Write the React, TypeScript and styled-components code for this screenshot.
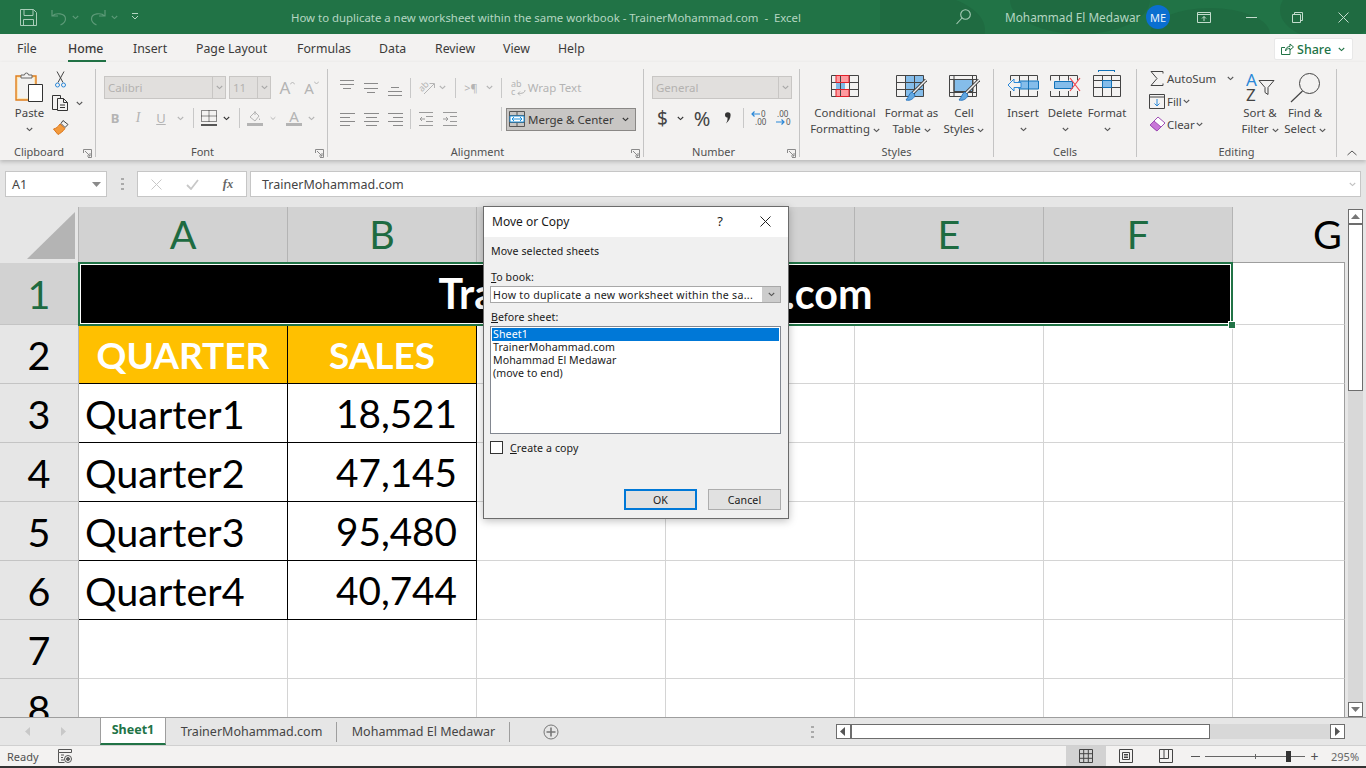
import React from 'react'
import styled, { createGlobalStyle } from 'styled-components'

const UI = '"Noto Sans", "Open Sans", "Liberation Sans", sans-serif'
const SHEET = 'Lato, "Liberation Sans", sans-serif'
const GREEN = '#217346'
const DIM = '#b4b4b4'
const INK = '#444444'

const Global = createGlobalStyle`
  html, body { margin: 0; padding: 0; overflow: hidden; }
  body { font-family: ${UI}; background: #e6e6e6; }
  * { box-sizing: border-box; }
`

const Page = styled.div`
  width: 1366px;
  height: 768px;
  display: flex;
  flex-direction: column;
  position: relative;
  overflow: hidden;
`

/* ---------- title bar ---------- */
const TitleBar = styled.header`
  height: 34px;
  flex: none;
  background: ${GREEN};
  display: flex;
  align-items: center;
  position: relative;
  overflow: hidden;
  color: #b5d6c2;
  font-size: 11.4px;
`
const Blobs = styled.svg`
  position: absolute;
  left: 880px;
  top: 0;
`
const Quick = styled.div`
  width: 291px;
  display: flex;
  align-items: center;
  padding-left: 20px;
  gap: 5px;
  flex: none;
  z-index: 1;
`
const TitleText = styled.div`
  width: 665px;
  flex: none;
  white-space: pre;
  z-index: 1;
`
const WindowTools = styled.div`
  flex: 1;
  display: flex;
  align-items: center;
  z-index: 1;
`
const Account = styled.span`
  width: 141px;
  margin-left: 34px;
  flex: none;
  white-space: nowrap;
  font-size: 11.8px;
`
const Avatar = styled.span`
  width: 24px;
  height: 24px;
  flex: none;
  border-radius: 50%;
  background: #0a6fd0;
  color: #e8f2fb;
  font-size: 11px;
  display: flex;
  align-items: center;
  justify-content: center;
`
const Slot = styled.span<{ $w: number }>`
  width: ${p => p.$w}px;
  flex: none;
  display: inline-flex;
  align-items: center;
  justify-content: center;
`

/* ---------- tab strip ---------- */
const TabStrip = styled.nav`
  height: 28px;
  flex: none;
  background: #f3f2f1;
  display: flex;
  align-items: flex-start;
  padding-left: 17px;
  font-size: 12.3px;
  color: #3b3a39;
  position: relative;
`
const RibbonTab = styled.span<{ $w: number; $on?: boolean }>`
  width: ${p => p.$w}px;
  flex: none;
  height: 28px;
  line-height: 29px;
  white-space: nowrap;
  position: relative;
  font-weight: ${p => (p.$on ? 500 : 400)};
  ${p =>
    p.$on &&
    `&::after { content: ''; position: absolute; left: 0; bottom: 0; width: 38px; height: 2px; background: ${GREEN}; }`}
`
const ShareButton = styled.div`
  position: absolute;
  left: 1274px;
  top: 4px;
  width: 79px;
  height: 22px;
  background: #fff;
  border: 1px solid #e8e8e8;
  border-radius: 2px;
  color: ${GREEN};
  font-size: 12.5px;
  font-weight: 500;
  display: flex;
  align-items: center;
  padding-left: 6px;
  gap: 3px;
`

/* ---------- ribbon ---------- */
const Ribbon = styled.section`
  height: 98px;
  flex: none;
  background: #f3f2f1;
  display: flex;
  box-shadow: 0 2px 4px rgba(0, 0, 0, 0.2);
  position: relative;
  z-index: 2;
  font-size: 11.4px;
  color: #444;
`
const Group = styled.div<{ $w: number }>`
  width: ${p => p.$w}px;
  flex: none;
  height: 88px;
  margin-top: 7px;
  border-right: 1px solid #c4c4c4;
  display: flex;
  flex-direction: column;
  position: relative;
`
const GroupBody = styled.div<{ $left?: number }>`
  flex: 1;
  display: flex;
  padding-left: ${p => p.$left ?? 0}px;
`
const GroupLabel = styled.div<{ $shift?: number }>`
  height: 16px;
  line-height: 16px;
  margin-bottom: -3px;
  text-align: center;
  font-size: 11px;
  color: #505050;
  padding-right: ${p => p.$shift ?? 0}px;
`
const Launcher = styled.span`
  position: absolute;
  right: 3px;
  bottom: -1px;
  line-height: 0;
`
const Stack = styled.div`
  display: flex;
  flex-direction: column;
`
const SmallStack = styled(Stack)`
  width: 90px;
  flex: none;
`
const ToolRow = styled.div<{ $h: number; $top?: number }>`
  height: ${p => p.$h}px;
  margin-top: ${p => p.$top ?? 0}px;
  display: flex;
  align-items: center;
`
const Tool = styled.span<{ $w: number; $off?: boolean; $size?: number }>`
  width: ${p => p.$w}px;
  flex: none;
  display: inline-flex;
  align-items: center;
  justify-content: center;
  color: ${p => (p.$off ? DIM : INK)};
  font-size: ${p => (p.$size ? `${p.$size}px` : 'inherit')};
  white-space: nowrap;
`
const BoldLetter = styled(Tool)`
  font-weight: 700;
`
const ItalicLetter = styled(Tool)`
  font-family: 'Liberation Serif', serif;
  font-style: italic;
`
const UnderLetter = styled(Tool)`
  text-decoration: underline;
`
const ToolSep = styled.span<{ $h?: number }>`
  width: 1px;
  height: ${p => p.$h ?? 20}px;
  flex: none;
  background: #c8c8c8;
`
const BigButton = styled.div<{ $w: number }>`
  width: ${p => p.$w}px;
  flex: none;
  display: flex;
  flex-direction: column;
  align-items: center;
  line-height: 16px;
  text-align: center;
  white-space: nowrap;
`
const BigIcon = styled.div<{ $pad: number }>`
  height: 36px;
  padding-top: ${p => p.$pad}px;
  display: flex;
  align-items: flex-start;
  justify-content: center;
  line-height: 0;
`
const DownChev = styled.div`
  height: 16px;
  display: flex;
  align-items: center;
`
const Combo = styled.div<{ $w: number; $ml?: number }>`
  width: ${p => p.$w}px;
  margin-left: ${p => p.$ml ?? 0}px;
  height: 23px;
  flex: none;
  display: flex;
  background: #e1dfdd;
  border: 1px solid #c8c6c4;
  color: #b4b2b0;
  font-size: 11.5px;
`
const ComboText = styled.span`
  flex: 1;
  line-height: 21px;
  padding-left: 3px;
  white-space: nowrap;
`
const ComboArrow = styled.span`
  width: 13px;
  border-left: 1px solid #c8c6c4;
  display: flex;
  align-items: center;
  justify-content: center;
`
const MergeButton = styled.div`
  width: 130px;
  height: 23px;
  flex: none;
  margin-left: 4px;
  background: #c8c6c4;
  border: 1px solid #8a8886;
  display: flex;
  align-items: center;
  padding-left: 2px;
  gap: 3px;
  color: #3b3a39;
  font-size: 11.5px;
  white-space: nowrap;
  svg {
    flex: none;
  }
`
const SmallCmd = styled.div<{ $h: number }>`
  height: ${p => p.$h}px;
  display: flex;
  align-items: center;
  white-space: nowrap;
`
const CmdIcon = styled.span`
  width: 18px;
  margin-right: 1px;
  flex: none;
  display: inline-flex;
  justify-content: center;
`
const Collapse = styled.span`
  position: absolute;
  right: 9px;
  bottom: 4px;
  line-height: 0;
`

/* ---------- formula bar ---------- */
const FormulaBar = styled.div`
  height: 47px;
  flex: none;
  background: #e6e6e6;
  padding: 11px 5px 10px;
  display: flex;
  font-size: 12.5px;
  color: #444;
`
const Field = styled.div<{ $w?: number }>`
  width: ${p => (p.$w ? `${p.$w}px` : 'auto')};
  flex: ${p => (p.$w ? 'none' : 1)};
  height: 26px;
  background: #fff;
  border: 1px solid #c6c6c6;
  display: flex;
  align-items: center;
`
const FieldText = styled.span<{ $left: number }>`
  padding-left: ${p => p.$left}px;
  white-space: nowrap;
  flex: 1;
`
const Grip = styled.span`
  width: 30px;
  flex: none;
  display: flex;
  align-items: center;
  justify-content: center;
`
const FxTool = styled.span`
  flex: 1;
  display: flex;
  align-items: center;
  justify-content: center;
`
const FxLabel = styled(FxTool)`
  font-family: 'Liberation Serif', serif;
  font-style: italic;
  font-weight: 700;
  color: #666;
`

/* ---------- sheet ---------- */
const SheetArea = styled.div`
  flex: 1;
  min-height: 0;
  display: flex;
  background: #e6e6e6;
`
const Grid = styled.div`
  width: 1345px;
  flex: none;
  display: grid;
  grid-template-columns: 79px 209px repeat(5, 189px) 112px;
  grid-template-rows: 56px 62px 59px 59px 59px 59px 59px 59px 59px;
  overflow: hidden;
  font-family: ${SHEET};
  font-size: 39.5px;
  color: #000;
`
const Corner = styled.div`
  background: #e6e6e6;
  border-right: 1px solid #b4b4b4;
  line-height: 0;
  padding: 5px 0 0 27px;
`
const ColHead = styled.div`
  background: #d2d2d2;
  color: #1e6b41;
  border-right: 1px solid #b4b4b4;
  padding-bottom: 3px;
  display: flex;
  align-items: center;
  justify-content: center;
`
const OffHead = styled.div`
  background: #e6e6e6;
  border-bottom: 1px solid #9e9e9e;
  display: flex;
  align-items: center;
  padding: 0 0 3px 80px;
`
const RowHead = styled.div<{ $on?: boolean }>`
  background: ${p => (p.$on ? '#d2d2d2' : '#e6e6e6')};
  color: ${p => (p.$on ? '#1e6b41' : '#000')};
  border-right: 1px solid #b4b4b4;
  border-bottom: 1px solid #c4c4c4;
  display: flex;
  align-items: center;
  justify-content: center;
`
const Cell = styled.div<{ $last?: boolean }>`
  background: #fff;
  border-right: 1px solid ${p => (p.$last ? '#9e9e9e' : '#d4d4d4')};
  border-bottom: 1px solid #d4d4d4;
`
const MergedTitle = styled.div`
  grid-column: 2 / 8;
  margin: -1px 0 -1px -1px;
  background: #000;
  color: #fff;
  border: 2px solid ${GREEN};
  box-shadow: inset 0 0 0 1px #fff;
  font-size: 41.2px;
  font-weight: 700;
  padding-bottom: 2px;
  display: flex;
  align-items: center;
  justify-content: center;
  position: relative;
  z-index: 1;
`
const FillHandle = styled.span`
  position: absolute;
  right: -4px;
  bottom: -4px;
  width: 6px;
  height: 6px;
  background: ${GREEN};
  outline: 1px solid #fff;
`
const HeadCell = styled.div`
  background: #ffc000;
  color: #fff;
  font-size: 37px;
  font-weight: 700;
  border-right: 1px solid #000;
  border-bottom: 1px solid #000;
  display: flex;
  align-items: center;
  justify-content: center;
`
const DataCell = styled.div<{ $num?: boolean }>`
  background: #fff;
  border-right: 1px solid #000;
  border-bottom: 1px solid #000;
  display: flex;
  align-items: center;
  font-size: ${p => (p.$num ? 38.7 : 39.5)}px;
  justify-content: ${p => (p.$num ? 'flex-end' : 'flex-start')};
  padding: ${p => (p.$num ? '0 19px 0 0' : '0 0 0 6px')};
`

/* ---------- scrollbars ---------- */
const VScroll = styled.div`
  width: 21px;
  flex: none;
  padding: 2px 3px 0 3px;
  display: flex;
  flex-direction: column;
`
const ScrollBtn = styled.div`
  width: 15px;
  height: 15px;
  flex: none;
  background: #fff;
  border: 1px solid #6d6d6d;
  display: flex;
  align-items: center;
  justify-content: center;
`
const VThumb = styled.div`
  height: 167px;
  flex: none;
  background: #fff;
  border: 1px solid #6d6d6d;
`
const VTrack = styled.div`
  flex: 1;
  background: #d8d8d8;
`
const TabBar = styled.div`
  height: 28px;
  flex: none;
  background: #e6e6e6;
  border-top: 1px solid #9e9e9e;
  display: flex;
  font-size: 12.5px;
  color: #444;
  position: relative;
  z-index: 1;
`
const TabNav = styled.div`
  width: 100px;
  flex: none;
  display: flex;
  align-items: center;
  padding-left: 24px;
  gap: 26px;
`
const ActiveTab = styled.div`
  width: 66px;
  flex: none;
  height: 28px;
  margin-top: -1px;
  padding-bottom: 2px;
  background: #fff;
  border: 1px solid #9e9e9e;
  border-bottom: 2px solid ${GREEN};
  color: ${GREEN};
  font-weight: 700;
  display: flex;
  align-items: center;
  justify-content: center;
`
const SheetTab = styled.div<{ $w: number }>`
  width: ${p => p.$w}px;
  flex: none;
  display: flex;
  align-items: center;
  justify-content: center;
  white-space: nowrap;
  position: relative;
  height: 26px;
  &::after {
    content: '';
    position: absolute;
    right: 0;
    top: 4px;
    height: 20px;
    width: 1px;
    background: #9e9e9e;
  }
`
const AddSheet = styled.div`
  width: 311px;
  flex: none;
  padding-left: 33px;
  display: flex;
  align-items: center;
`
const HScroll = styled.div`
  width: 509px;
  margin-top: 6px;
  height: 15px;
  flex: none;
  display: flex;
`
const HThumb = styled.div`
  width: 359px;
  flex: none;
  background: #fff;
  border: 1px solid #6d6d6d;
`
const HTrack = styled.div`
  flex: 1;
  background: #d8d8d8;
`
const StatusBar = styled.footer`
  height: 21px;
  flex: none;
  background: #f3f2f1;
  display: flex;
  align-items: center;
  font-size: 11px;
  color: #505050;
  padding-left: 7px;
  border-top: 1px solid #d0d0d0;
`
const StatusReady = styled.span`
  width: 51px;
  flex: none;
`
const StatusView = styled.span<{ $w: number; $on?: boolean }>`
  width: ${p => p.$w}px;
  height: 20px;
  flex: none;
  display: flex;
  align-items: center;
  justify-content: center;
  background: ${p => (p.$on ? '#d2d2d2' : 'transparent')};
`
const ZoomSlider = styled.div`
  width: 100px;
  height: 1px;
  flex: none;
  background: #666;
  position: relative;
`
const ZoomTick = styled.span`
  position: absolute;
  left: 50px;
  top: -2px;
  width: 1px;
  height: 5px;
  background: #666;
`
const ZoomThumb = styled.span`
  position: absolute;
  left: 81px;
  top: -5px;
  width: 5px;
  height: 11px;
  background: #333;
`
const PlusSign = styled(Slot)`
  font-size: 14px;
`
const ZoomValue = styled.span`
  margin-left: 7px;
  color: #666;
`
const BottomEdge = styled.div`
  height: 2px;
  flex: none;
  background: #333;
`

/* ---------- dialog ---------- */
const Dialog = styled.div`
  position: absolute;
  left: 483px;
  top: 206px;
  width: 306px;
  height: 313px;
  background: #f0f0f0;
  border: 1px solid #6b6b6b;
  box-shadow: 0 2px 8px rgba(0, 0, 0, 0.25);
  z-index: 5;
  font-size: 10.6px;
  color: #1a1a1a;
  display: flex;
  flex-direction: column;
  letter-spacing: 0.1px;
`
const DialogHead = styled.div`
  height: 30px;
  flex: none;
  background: #fff;
  display: flex;
  align-items: center;
  padding: 0 0 2px 8px;
  font-size: 12px;
  letter-spacing: 0;
`
const DialogTitle = styled.span`
  flex: 1;
`
const HeadBtn = styled.span<{ $w: number }>`
  width: ${p => p.$w}px;
  flex: none;
  display: inline-flex;
  justify-content: center;
  font-size: 13px;
`
const DialogBody = styled.div`
  flex: 1;
  padding: 6px 7px 8px 6px;
  display: flex;
  flex-direction: column;
`
const DlgLine = styled.div<{ $top?: number }>`
  height: 14px;
  line-height: 14px;
  margin-top: ${p => p.$top ?? 0}px;
  margin-left: 1px;
  white-space: nowrap;
`
const DlgCombo = styled.div`
  height: 17px;
  margin-top: 2px;
  background: #fff;
  border: 1px solid #a8a8a8;
  display: flex;
  align-items: center;
  padding-left: 2px;
  white-space: nowrap;
  overflow: hidden;
`
const DlgComboText = styled.span`
  flex: 1;
  letter-spacing: 0.29px;
`
const DlgComboBtn = styled.span`
  width: 18px;
  height: 15px;
  flex: none;
  background: #cccccc;
  display: flex;
  align-items: center;
  justify-content: center;
`
const ListBox = styled.div`
  height: 108px;
  margin-top: 2px;
  background: #fff;
  border: 1px solid #828790;
  padding: 1px 1px 0 1px;
  line-height: 13px;
`
const ListItem = styled.div<{ $on?: boolean }>`
  height: 13px;
  padding-left: 1px;
  background: ${p => (p.$on ? '#0078d7' : 'transparent')};
  color: ${p => (p.$on ? '#fff' : '#1a1a1a')};
`
const CheckRow = styled.div`
  margin-top: 7px;
  display: flex;
  align-items: center;
  height: 13px;
`
const CheckBox = styled.span`
  width: 13px;
  height: 13px;
  flex: none;
  background: #fff;
  border: 1px solid #333;
  margin-right: 7px;
`
const DlgActions = styled.div`
  margin-top: auto;
  display: flex;
  justify-content: flex-end;
  gap: 11px;
`
const DlgButton = styled.div<{ $def?: boolean }>`
  width: 73px;
  height: 21px;
  background: #e1e1e1;
  border: ${p => (p.$def ? '2px solid #0078d7' : '1px solid #adadad')};
  display: flex;
  align-items: center;
  justify-content: center;
`
const U = styled.span`
  text-decoration: underline;
`
const Raised = styled.svg`
  margin-bottom: 9px;
`

/* ---------- icons ---------- */
const Chev = ({ c = '#555', w = 7 }: { c?: string; w?: number }) => (
  <svg width={w} height="5" viewBox="0 0 7 5">
    <path d="M.8 1l2.700 2.600L6.200 1" fill="none" stroke={c} strokeWidth="1.100" />
  </svg>
)
const Launch = () => (
  <svg width="9" height="9" viewBox="0 0 9 9" fill="none" stroke="#8a8a8a">
    <path d="M.5 4V.5h8v8H5M2 2l5 5M7 4v3H4" />
  </svg>
)
const SaveIcon = () => (
  <svg width="17" height="17" viewBox="0 0 17 17" fill="none" stroke="#a9cdb8">
    <path d="M.5.500h13l3 3v13H.5zM4 .5v6h9v-6M3.500 16.500v-6h10v6" />
  </svg>
)
const Undo = ({ flip }: { flip?: boolean }) => (
  <svg width="16" height="17" viewBox="0 0 16 17" fill="none" stroke="#5d9a78" strokeWidth="1.200">
    <path transform={flip ? 'matrix(-1 0 0 1 16 0)' : undefined} d="M1 1v6h6M1.500 7c3-3.500 13-3 13 3 0 3-3 5-5 6" />
  </svg>
)
const Customize = () => (
  <svg width="8" height="8" viewBox="0 0 8 8" fill="none" stroke="#b5d6c2">
    <path d="M1 .5h6M1 3l3 3 3-3" />
  </svg>
)
const SearchIcon = () => (
  <svg width="15" height="16" viewBox="0 0 15 16" fill="none" stroke="#a9cdb8" strokeWidth="1.100">
    <circle cx="9.500" cy="5.500" r="4.800" />
    <path d="M6 9l-5.500 6" />
  </svg>
)
const DisplayIcon = () => (
  <svg width="14" height="11" viewBox="0 0 14 11" fill="none" stroke="#c3dccd">
    <path d="M.5.500h13v10H.5zM.5 2.500h13M7 9V4.500M5 6.500l2-2 2 2" />
  </svg>
)
const MinIcon = ({ c = '#c3dccd', w = 11 }: { c?: string; w?: number }) => (
  <svg width={w} height="1" viewBox={`0 0 ${w} 1`}>
    <path d={`M0 .5h${w}`} stroke={c} />
  </svg>
)
const RestoreIcon = () => (
  <svg width="11" height="11" viewBox="0 0 11 11" fill="none" stroke="#c3dccd">
    <path d="M.5 2.500h8v8h-8zM2.500 2.500v-2h8v8h-2" />
  </svg>
)
const CloseIcon = ({ c = '#c3dccd', s = 11 }: { c?: string; s?: number }) => (
  <svg width={s} height={s} viewBox="0 0 11 11">
    <path d="M.5.500l10 10M10.500.500l-10 10" stroke={c} />
  </svg>
)
const ShareIcon = () => (
  <svg width="13" height="12" viewBox="0 0 13 12" fill="none" stroke={GREEN}>
    <path d="M9 6.500v5H.5v-7H4M4.500 8c0-3 2-4.500 4.500-4.500V1l3.500 3L9 7V5.500C7 5.500 5.500 6 4.500 8z" />
  </svg>
)
const PasteIcon = () => (
  <svg width="29" height="31" viewBox="0 0 29 31">
    <path d="M1 4h20v24H1z" fill="#fbe6b8" stroke="#e07d1c" strokeWidth="1.400" />
    <path d="M3 6h16v20H3z" fill="#f3f2f1" />
    <path d="M6 6V3h3.500a2 2 0 0 1 4 0H17v3z" fill="#f3f2f1" stroke="#666" />
    <path d="M13.500 12.500h14v17h-14z" fill="#fff" stroke="#333" />
  </svg>
)
const Scissors = () => (
  <svg width="11" height="17" viewBox="0 0 11 17" fill="none">
    <path d="M2 .5l6 11M9 .5l-6 11" stroke="#444" />
    <circle cx="2.500" cy="14" r="2" stroke="#2b88d8" />
    <circle cx="8.500" cy="14" r="2" stroke="#2b88d8" />
  </svg>
)
const CopyIcon = () => (
  <svg width="17" height="16" viewBox="0 0 17 16" fill="#f3f2f1" stroke="#333">
    <path d="M.5.500h8v14h-8z" />
    <path d="M5.500 3.500h6l4 4v8h-10zM11.500 3.500v4h4M8 10h5M8 12.500h5" />
  </svg>
)
const BrushIcon = () => (
  <svg width="16" height="15" viewBox="0 0 16 15">
    <path d="M10 .5l5 4-3 3-4-4z" fill="none" stroke="#444" />
    <path d="M7 4l5 4.500c-2 3-5 5-7 6L.5 9C3 8.500 5 7 7 4z" fill="#f39a3c" stroke="#d9741a" />
  </svg>
)
const FontGrow = ({ small }: { small?: boolean }) => (
  <Tool $w={small ? 19 : 21} $off $size={small ? 15 : 17}>
    A
    <Raised width="5" height="4" viewBox="0 0 5 4">
      <path d={small ? 'M0 .5l2.500 2.500L5 .5' : 'M0 3.500L2.500 1 5 3.500'} fill="none" stroke={DIM} />
    </Raised>
  </Tool>
)
const Lines = ({ rows, c = '#8a8a8a', w = 15, h = 14 }: { rows: [number, number, number][]; c?: string; w?: number; h?: number }) => (
  <svg width={w} height={h} viewBox={`0 0 ${w} ${h}`} stroke={c}>
    {rows.map(([y, a, b]) => (
      <path key={y} d={`M${a} ${y + 0.5}H${b}`} />
    ))}
  </svg>
)
const BorderIcon = () => (
  <svg width="16" height="16" viewBox="0 0 16 16" fill="none" stroke="#222" strokeDasharray="1 1">
    <path d="M.5.500h15v11H.500zM8 .5v11M.5 6h15" />
    <path d="M0 15h16" strokeDasharray="none" strokeWidth="1.500" />
  </svg>
)
const FillIcon = () => (
  <svg width="16" height="16" viewBox="0 0 16 16" fill="none" stroke={DIM}>
    <path d="M3 7l5-5 4 4-4 5zM8 1v4M12.500 8.500v1.500" />
    <path d="M0 13h16v3H0z" fill={DIM} stroke="none" />
  </svg>
)
const TextColor = () => (
  <svg width="16" height="16" viewBox="0 0 16 16">
    <text x="8" y="11.500" fontSize="15" textAnchor="middle" fill={DIM}>A</text>
    <path d="M0 13h16v3H0z" fill={DIM} />
  </svg>
)
const Orient = () => (
  <svg width="17" height="16" viewBox="0 0 17 16" fill="none" stroke={DIM}>
    <text x="1" y="11" fontSize="9" fill={DIM} stroke="none" transform="rotate(-45 4 8)">ab</text>
    <path d="M6 14L16 4M11.500 3.500H16.500V8" />
  </svg>
)
const Indent = ({ right }: { right?: boolean }) => (
  <svg width="14" height="14" viewBox="0 0 14 14" fill="none" stroke="#9a9a9a">
    <path d="M0 .5h14M7 4.500h7M7 9.500h7M0 13.500h14" />
    <path d={right ? 'M0 7h5M3 5l2 2-2 2' : 'M1 7h5M3 5L1 7l2 2'} />
  </svg>
)
const WrapIcon = () => (
  <svg width="15" height="16" viewBox="0 0 15 16" fill="none">
    <text x="0" y="7" fontSize="9" fill={DIM}>ab</text>
    <text x="0" y="15" fontSize="9" fill={DIM}>c</text>
    <path d="M14 10c0 3-3 3.500-7 3.500M9 11.500l-2 2 2 2" stroke={DIM} />
  </svg>
)
const MergeIcon = () => (
  <svg width="16" height="16" viewBox="0 0 16 16" fill="none" stroke="#555">
    <path d="M.5.500h15v15H.5zM.5 4.500h15M.5 11.500h15M8 .5v4M8 11.500v4" />
    <path d="M1 5h14v6H1z" fill="#fff" stroke="#1b8fdc" />
    <path d="M3 8h10M5 6L3 8l2 2M11 6l2 2-2 2" stroke="#1b8fdc" />
  </svg>
)
const DecIcon = ({ more }: { more?: boolean }) => (
  <svg width="18" height="16" viewBox="0 0 18 16">
    <path d={more ? 'M1 12h8M6.500 9.500L9 12l-2.500 2.500' : 'M1 4h8M3.500 1.500L1 4l2.500 2.500'} fill="none" stroke="#2b88d8" strokeWidth="1.200" />
    <text x={more ? 2 : 10} y="7" fontSize="8" fill="#555">{more ? '.00' : '0'}</text>
    <text x={more ? 11 : 4} y="15" fontSize="8" fill="#555">{more ? '0' : '.00'}</text>
  </svg>
)
const gridLines = 'M.5.500h27v21H.5zM9.500.5v21M18.500.5v21M.5 7.500h27M.5 14.500h27'
const CondIcon = () => (
  <svg width="28" height="22" viewBox="0 0 28 22" fill="none">
    <path d="M5 .5h13v7H5zM5 14.500h13v7H5z" fill="#ff9a9f" />
    <path d="M5 7.500h9v7H5z" fill="#7fb9e8" />
    <path d={gridLines} stroke="#444" />
    <path d="M5 .5h13v7H5zM5 14.500h13v7H5z" stroke="#e0202a" />
  </svg>
)
const TableIcon = ({ cell }: { cell?: boolean }) => (
  <svg width="31" height="27" viewBox="0 0 31 27" fill="none">
    <path d={cell ? 'M5 4h19v12H5z' : 'M9.500.5H28v21H9.500z'} fill="#85bdea" />
    {cell ? (
      <path d="M.5.500h27v21H.5zM.5 4.500h27M.5 17.500h27M5 .5v21M23.500.5v21M5 4.500h19v12H5z" stroke="#444" />
    ) : (
      <path d={gridLines} stroke="#444" />
    )}
    <path d="M30 5L16 19" stroke="#444" strokeWidth="3.200" />
    <path d="M30 5L16 19" stroke="#f3f2f1" strokeWidth="1.400" />
    <path d="M16 17c-3 1-3 5-6 8 4 1 8-1 9-5z" fill="#62a7e0" stroke="#2b78c2" />
  </svg>
)
const InsertIcon = () => (
  <svg width="32" height="25" viewBox="0 0 32 25" fill="none">
    <path d="M4.500 3.500h27v21h-27z" fill="#f3f2f1" />
    <path d="M3.500 3.500h27M3.500 24.500h27M3.500 3.500v5M3.500 19v5.500M12.500 3.500v21M21.500 3.500v21M30.500 3.500v5M30.500 19v5.500" stroke="#444" />
    <path d="M12 9h19.500v8H12z" fill="#85bdea" stroke="#1272b8" />
    <path d="M21.500 9v8" stroke="#1272b8" />
    <path d="M1 13l6-6v3.500h7v5H7V19z" fill="#f3f2f1" stroke="#2b88d8" />
  </svg>
)
const DeleteIcon = () => (
  <svg width="31" height="25" viewBox="0 0 31 25" fill="none">
    <path d="M.5 3.500h27M.5 24.500h27M.5 3.500v5M.5 19v5.500M9.500 3.500v5M9.500 19v5.500M18.500 3.500v5M18.500 19v5.500M27.500 3.500v5M27.500 19v5.500" stroke="#444" />
    <path d="M4.500 9.500h18v7h-18z" fill="#85bdea" stroke="#1272b8" />
    <path d="M20 6l10 13M30 6L20 19" stroke="#f0474f" strokeWidth="1.200" />
  </svg>
)
const FormatIcon = () => (
  <svg width="28" height="27" viewBox="0 0 28 27" fill="none">
    <path d="M5.500.5h16M5.500 0v2M21.500 0v2" stroke="#1272b8" />
    <path d="M9.500 10.500h9v7h-9z" fill="#85bdea" />
    <path d="M.5 5.500h27v21H.5zM.5 10.500h27M.5 17.500h27M9.500 5.500v21M18.500 5.500v21" stroke="#444" />
    <path d="M9.500 10.500h9v7h-9z" stroke="#1272b8" />
  </svg>
)
const SigmaIcon = () => (
  <svg width="14" height="15" viewBox="0 0 14 15" fill="none" stroke="#444">
    <path d="M13 2.500V.5H1l6 7-6 7h12v-2" />
  </svg>
)
const FillDown = () => (
  <svg width="16" height="15" viewBox="0 0 16 15" fill="none">
    <path d="M.5.500h15v14H.5z" stroke="#444" />
    <path d="M.5 3h15" stroke="#444" />
    <path d="M8 5v7M5.500 9.500L8 12l2.500-2.500" stroke="#2b88d8" />
  </svg>
)
const Eraser = () => (
  <svg width="17" height="16" viewBox="0 0 17 16">
    <path d="M1 9l8-8 7 6-8 8z" fill="#fff" stroke="#9f4fb5" />
    <path d="M1 9l4-4 7 6-4 4z" fill="#c877d8" stroke="#9f4fb5" />
  </svg>
)
const SortIcon = () => (
  <svg width="29" height="30" viewBox="0 0 29 30" fill="none">
    <text x="0" y="14" fontSize="17" fill="#2b88d8">A</text>
    <text x="0" y="29" fontSize="17" fill="#444">Z</text>
    <path d="M13 8.500h15l-6 7v7l-3-2v-5z" stroke="#444" />
  </svg>
)
const FindIcon = () => (
  <svg width="31" height="31" viewBox="0 0 31 31" fill="none" stroke="#444">
    <circle cx="19.500" cy="11.500" r="10" />
    <path d="M12.500 19L1 30" strokeWidth="1.200" />
  </svg>
)
const CommaIcon = () => (
  <svg width="7" height="12" viewBox="0 0 7 12">
    <path d="M1 3a2.800 2.800 0 0 1 5.600 0c0 3-1.600 6-4.600 8.500C3.500 9 3.700 7 3.500 5.500 2 5.800 1 4.500 1 3z" fill="#333" />
  </svg>
)
const CheckMark = () => (
  <svg width="13" height="11" viewBox="0 0 13 11">
    <path d="M1 6l4 4 7-9" fill="none" stroke="#c8c8c8" strokeWidth="1.800" />
  </svg>
)
const CollapseIcon = () => (
  <svg width="10" height="6" viewBox="0 0 10 6">
    <path d="M.5 5L5 1l4.500 4" fill="none" stroke="#555" />
  </svg>
)
const Tri = ({ dir = 'down', c = '#777' }: { dir?: string; c?: string }) => {
  const d =
    dir === 'up' ? 'M0 7h9L4.500 2z' : dir === 'left' ? 'M6 0v9L1 4.500z' : dir === 'right' ? 'M2 0v9l5-4.500z' : 'M0 2h9L4.500 7z'
  return (
    <svg width="9" height="9" viewBox="0 0 9 9">
      <path d={d} fill={c} />
    </svg>
  )
}
const PlusCircle = () => (
  <svg width="16" height="16" viewBox="0 0 16 16" fill="none" stroke="#777">
    <circle cx="8" cy="8" r="7" />
    <path d="M8 3.500v9M3.500 8h9" strokeWidth="1.600" />
  </svg>
)
const MacroIcon = () => (
  <svg width="14" height="14" viewBox="0 0 14 14" fill="none" stroke="#555">
    <path d="M.5.500h13v3H.5zM.5 3.500v10h6M3 6h3M3 8.500h2M3 11h3" />
    <circle cx="10" cy="10" r="3.500" />
    <circle cx="10" cy="10" r="1.500" fill="#555" />
  </svg>
)
const Dots = () => (
  <svg width="3" height="12" viewBox="0 0 3 12" fill="#aaa">
    <path d="M0 0h3v2H0zM0 5h3v2H0zM0 10h3v2H0z" />
  </svg>
)
const ViewNormal = () => (
  <svg width="14" height="14" viewBox="0 0 14 14" fill="none" stroke="#444">
    <path d="M.5.500h13v13H.5zM4.700.5v13M9.300.5v13M.5 4.700h13M.5 9.300h13" />
  </svg>
)
const ViewPage = () => (
  <svg width="14" height="14" viewBox="0 0 14 14" fill="none" stroke="#444">
    <path d="M.5.500h13v13H.5zM3.500 3.500h7v7h-7zM5 5.500h4M5 7h4M5 8.500h4" />
  </svg>
)
const ViewBreak = () => (
  <svg width="14" height="14" viewBox="0 0 14 14" fill="none" stroke="#444">
    <path d="M.5.500h13v13H.5zM.5 9.500h9V.5M5 .5v9" />
  </svg>
)

const Big = ({ w, pad, icon, lines, chev }: { w: number; pad: number; icon: React.ReactNode; lines: string[]; chev?: boolean }) => (
  <BigButton $w={w}>
    <BigIcon $pad={pad}>{icon}</BigIcon>
    {lines.map((l, i) => (
      <span key={l}>
        {l}
        {chev && i === lines.length - 1 ? (
          <>
            {' '}
            <Chev />
          </>
        ) : null}
      </span>
    ))}
    {!chev && (
      <DownChev>
        <Chev />
      </DownChev>
    )}
  </BigButton>
)

type Row3 = [number, number, number][]
const left3: Row3 = [
  [1, 0, 15],
  [5, 0, 10],
  [9, 0, 15],
  [13, 0, 10],
]
const center3: Row3 = [
  [1, 0, 15],
  [5, 2, 13],
  [9, 0, 15],
  [13, 2, 13],
]
const right3: Row3 = [
  [1, 0, 15],
  [5, 5, 15],
  [9, 0, 15],
  [13, 5, 15],
]

const quarters = [
  ['Quarter1', '18,521'],
  ['Quarter2', '47,145'],
  ['Quarter3', '95,480'],
  ['Quarter4', '40,744'],
]
const plain = [0, 1, 2, 3, 4]

const tabs: [string, number][] = [
  ['File', 51],
  ['Home', 65],
  ['Insert', 63],
  ['Page Layout', 101],
  ['Formulas', 82],
  ['Data', 56],
  ['Review', 68],
  ['View', 55],
  ['Help', 40],
]

export default function App() {
  return (
    <Page>
      <Global />
      <TitleBar>
        <Blobs width="486" height="34" viewBox="0 0 486 34">
          <ellipse cx="30" cy="30" rx="75" ry="38" fill="#1f6b41" />
          <ellipse cx="200" cy="0" rx="70" ry="34" fill="#1f6b41" />
          <ellipse cx="330" cy="34" rx="60" ry="26" fill="#1f6b41" />
          <ellipse cx="450" cy="10" rx="50" ry="30" fill="#1f6b41" />
        </Blobs>
        <Quick>
          <SaveIcon />
          <Slot $w={4} />
          <Undo />
          <Chev c="#5d9a78" />
          <Slot $w={1} />
          <Undo flip />
          <Chev c="#5d9a78" />
          <Slot $w={3} />
          <Customize />
        </Quick>
        <TitleText>How to duplicate a new worksheet within the same workbook - TrainerMohammad.com  -  Excel</TitleText>
        <WindowTools>
          <SearchIcon />
          <Account>Mohammad El Medawar</Account>
          <Avatar>ME</Avatar>
          <Slot $w={68}>
            <DisplayIcon />
          </Slot>
          <Slot $w={26}>
            <MinIcon />
          </Slot>
          <Slot $w={66}>
            <RestoreIcon />
          </Slot>
          <Slot $w={26}>
            <CloseIcon />
          </Slot>
        </WindowTools>
      </TitleBar>

      <TabStrip>
        {tabs.map(([t, w]) => (
          <RibbonTab key={t} $w={w} $on={t === 'Home'}>
            {t}
          </RibbonTab>
        ))}
        <ShareButton>
          <ShareIcon />
          Share
          <Slot $w={14}>
            <Chev c={GREEN} />
          </Slot>
        </ShareButton>
      </TabStrip>

      <Ribbon>
        <Group $w={96}>
          <GroupBody $left={15}>
            <BigButton $w={29}>
              <BigIcon $pad={3}>
                <PasteIcon />
              </BigIcon>
              <span>Paste</span>
              <DownChev>
                <Chev />
              </DownChev>
            </BigButton>
            <Stack>
              <ToolRow $h={20}>
                <Tool $w={32}>
                  <Scissors />
                </Tool>
              </ToolRow>
              <ToolRow $h={24} $top={2}>
                <Tool $w={32}>
                  <CopyIcon />
                </Tool>
                <Chev />
              </ToolRow>
              <ToolRow $h={20} $top={2}>
                <Tool $w={34}>
                  <BrushIcon />
                </Tool>
              </ToolRow>
            </Stack>
          </GroupBody>
          <GroupLabel $shift={17}>Clipboard</GroupLabel>
          <Launcher>
            <Launch />
          </Launcher>
        </Group>

        <Group $w={232}>
          <GroupBody $left={8}>
            <Stack>
              <ToolRow $h={23} $top={7}>
                <Combo $w={122}>
                  <ComboText>Calibri</ComboText>
                  <ComboArrow>
                    <Chev c="#a8a8a8" />
                  </ComboArrow>
                </Combo>
                <Combo $w={42} $ml={3}>
                  <ComboText>11</ComboText>
                  <ComboArrow>
                    <Chev c="#a8a8a8" />
                  </ComboArrow>
                </Combo>
                <Slot $w={6} />
                <FontGrow />
                <Slot $w={4} />
                <FontGrow small />
              </ToolRow>
              <ToolRow $h={22} $top={8}>
                <BoldLetter $w={22} $off $size={13}>
                  B
                </BoldLetter>
                <ItalicLetter $w={24} $off $size={14}>
                  I
                </ItalicLetter>
                <UnderLetter $w={22} $off $size={13}>
                  U
                </UnderLetter>
                <Tool $w={16}>
                  <Chev c={DIM} />
                </Tool>
                <Slot $w={5} />
                <ToolSep />
                <Tool $w={29}>
                  <BorderIcon />
                </Tool>
                <Tool $w={7}>
                  <Chev c="#333" />
                </Tool>
                <Slot $w={9} />
                <ToolSep />
                <Tool $w={30}>
                  <FillIcon />
                </Tool>
                <Tool $w={6}>
                  <Chev c={DIM} />
                </Tool>
                <Slot $w={5} />
                <Tool $w={26}>
                  <TextColor />
                </Tool>
                <Tool $w={8}>
                  <Chev c={DIM} />
                </Tool>
              </ToolRow>
            </Stack>
          </GroupBody>
          <GroupLabel $shift={18}>Font</GroupLabel>
          <Launcher>
            <Launch />
          </Launcher>
        </Group>

        <Group $w={316}>
          <GroupBody $left={7}>
            <Stack>
              <ToolRow $h={23} $top={7}>
                <Tool $w={24}>
                  <Lines h={18} rows={[[1, 0, 14], [5, 0, 14], [9, 3, 11]]} />
                </Tool>
                <Tool $w={24}>
                  <Lines h={18} rows={[[4, 0, 14], [9, 0, 14], [13, 3, 11]]} />
                </Tool>
                <Tool $w={24}>
                  <Lines h={18} rows={[[8, 3, 11], [12, 0, 14], [16, 0, 14]]} />
                </Tool>
                <Slot $w={3} />
                <ToolSep />
                <Slot $w={3} />
                <Tool $w={24}>
                  <Orient />
                </Tool>
                <Tool $w={8}>
                  <Chev c={DIM} />
                </Tool>
                <Slot $w={9} />
                <ToolSep />
                <Tool $w={30} $off $size={11}>
                  {'>¶'}
                </Tool>
                <Tool $w={7}>
                  <Chev c={DIM} />
                </Tool>
                <Slot $w={8} />
                <ToolSep />
                <Slot $w={9} />
                <WrapIcon />
                <Tool $w={57} $off $size={11.5}>
                  Wrap Text
                </Tool>
              </ToolRow>
              <ToolRow $h={24} $top={8}>
                <Tool $w={24}>
                  <Lines rows={left3} />
                </Tool>
                <Tool $w={24}>
                  <Lines rows={center3} />
                </Tool>
                <Tool $w={24}>
                  <Lines rows={right3} />
                </Tool>
                <Slot $w={3} />
                <ToolSep />
                <Tool $w={30}>
                  <Indent />
                </Tool>
                <Tool $w={18}>
                  <Indent right />
                </Tool>
                <Slot $w={42} />
                <ToolSep $h={24} />
                <MergeButton>
                  <MergeIcon />
                  Merge &amp; Center
                  <Slot $w={18}>
                    <Chev c="#333" />
                  </Slot>
                </MergeButton>
              </ToolRow>
            </Stack>
          </GroupBody>
          <GroupLabel $shift={16}>Alignment</GroupLabel>
          <Launcher>
            <Launch />
          </Launcher>
        </Group>

        <Group $w={156}>
          <GroupBody $left={8}>
            <Stack>
              <ToolRow $h={23} $top={7}>
                <Combo $w={140}>
                  <ComboText>General</ComboText>
                  <ComboArrow>
                    <Chev c="#a8a8a8" />
                  </ComboArrow>
                </Combo>
              </ToolRow>
              <ToolRow $h={22} $top={8}>
                <Tool $w={21} $size={19}>
                  $
                </Tool>
                <Tool $w={15}>
                  <Chev c="#333" />
                </Tool>
                <Tool $w={28} $size={20}>
                  %
                </Tool>
                <Tool $w={22}>
                  <CommaIcon />
                </Tool>
                <Slot $w={5} />
                <ToolSep />
                <Slot $w={7} />
                <DecIcon />
                <Slot $w={6} />
                <DecIcon more />
              </ToolRow>
            </Stack>
          </GroupBody>
          <GroupLabel $shift={16}>Number</GroupLabel>
          <Launcher>
            <Launch />
          </Launcher>
        </Group>

        <Group $w={194}>
          <GroupBody $left={9}>
            <Big w={72} pad={6} icon={<CondIcon />} lines={['Conditional', 'Formatting']} chev />
            <Big w={61} pad={6} icon={<TableIcon />} lines={['Format as', 'Table']} chev />
            <Big w={44} pad={6} icon={<TableIcon cell />} lines={['Cell', 'Styles']} chev />
          </GroupBody>
          <GroupLabel>Styles</GroupLabel>
        </Group>

        <Group $w={143}>
          <GroupBody $left={8}>
            <Big w={42} pad={3} icon={<InsertIcon />} lines={['Insert']} />
            <Big w={42} pad={3} icon={<DeleteIcon />} lines={['Delete']} />
            <Big w={42} pad={1} icon={<FormatIcon />} lines={['Format']} />
          </GroupBody>
          <GroupLabel>Cells</GroupLabel>
        </Group>

        <Group $w={200}>
          <GroupBody $left={11}>
            <SmallStack>
              <SmallCmd $h={18}>
                <CmdIcon>
                  <SigmaIcon />
                </CmdIcon>
                AutoSum
                <Slot $w={28}>
                  <Chev />
                </Slot>
              </SmallCmd>
              <SmallCmd $h={28}>
                <CmdIcon>
                  <FillDown />
                </CmdIcon>
                Fill{' '}
                <Slot $w={10}>
                  <Chev />
                </Slot>
              </SmallCmd>
              <SmallCmd $h={18}>
                <CmdIcon>
                  <Eraser />
                </CmdIcon>
                Clear{' '}
                <Slot $w={10}>
                  <Chev />
                </Slot>
              </SmallCmd>
            </SmallStack>
            <Big w={44} pad={3} icon={<SortIcon />} lines={['Sort &', 'Filter']} chev />
            <Big w={46} pad={3} icon={<FindIcon />} lines={['Find &', 'Select']} chev />
          </GroupBody>
          <GroupLabel>Editing</GroupLabel>
        </Group>
        <Collapse>
          <CollapseIcon />
        </Collapse>
      </Ribbon>

      <FormulaBar>
        <Field $w={102}>
          <FieldText $left={6}>A1</FieldText>
          <Slot $w={20}>
            <Tri c="#8a8a8a" />
          </Slot>
        </Field>
        <Grip>
          <Dots />
        </Grip>
        <Field $w={110}>
          <FxTool>
            <CloseIcon c="#c8c8c8" />
          </FxTool>
          <FxTool>
            <CheckMark />
          </FxTool>
          <FxLabel>fx</FxLabel>
        </Field>
        <Slot $w={3} />
        <Field>
          <FieldText $left={11}>TrainerMohammad.com</FieldText>
          <Slot $w={16}>
            <Chev c="#c0c0c0" w={9} />
          </Slot>
        </Field>
      </FormulaBar>

      <SheetArea>
        <Grid>
          <Corner>
            <svg width="48" height="47" viewBox="0 0 48 47">
              <path d="M0 47h48V0z" fill="#b4b4b4" />
            </svg>
          </Corner>
          {['A', 'B', 'C', 'D', 'E', 'F'].map(c => (
            <ColHead key={c}>{c}</ColHead>
          ))}
          <OffHead>G</OffHead>

          <RowHead $on>1</RowHead>
          <MergedTitle>
            TrainerMohammad.com
            <FillHandle />
          </MergedTitle>
          <Cell $last />

          <RowHead>2</RowHead>
          <HeadCell>QUARTER</HeadCell>
          <HeadCell>SALES</HeadCell>
          {plain.map(i => (
            <Cell key={i} $last={i === 4} />
          ))}

          {quarters.map(([q, v], r) => (
            <React.Fragment key={q}>
              <RowHead>{r + 3}</RowHead>
              <DataCell>{q}</DataCell>
              <DataCell $num>{v}</DataCell>
              {plain.map(i => (
                <Cell key={i} $last={i === 4} />
              ))}
            </React.Fragment>
          ))}

          {[7, 8].map(r => (
            <React.Fragment key={r}>
              <RowHead>{r}</RowHead>
              <Cell />
              <Cell />
              {plain.map(i => (
                <Cell key={i} $last={i === 4} />
              ))}
            </React.Fragment>
          ))}
        </Grid>
        <VScroll>
          <ScrollBtn>
            <Tri dir="up" />
          </ScrollBtn>
          <VThumb />
          <VTrack />
          <ScrollBtn>
            <Tri />
          </ScrollBtn>
        </VScroll>
      </SheetArea>

      <TabBar>
        <TabNav>
          <Tri dir="left" c="#c8c8c8" />
          <Tri dir="right" c="#c8c8c8" />
        </TabNav>
        <ActiveTab>Sheet1</ActiveTab>
        <SheetTab $w={171}>TrainerMohammad.com</SheetTab>
        <SheetTab $w={173}>Mohammad El Medawar</SheetTab>
        <AddSheet>
          <PlusCircle />
          <Slot $w={252} />
          <Dots />
        </AddSheet>
        <Slot $w={15} />
        <HScroll>
          <ScrollBtn>
            <Tri dir="left" c="#555" />
          </ScrollBtn>
          <HThumb />
          <HTrack />
          <ScrollBtn>
            <Tri dir="right" c="#555" />
          </ScrollBtn>
        </HScroll>
      </TabBar>

      <StatusBar>
        <StatusReady>Ready</StatusReady>
        <MacroIcon />
        <Slot $w={994} />
        <StatusView $w={40} $on>
          <ViewNormal />
        </StatusView>
        <StatusView $w={40}>
          <ViewPage />
        </StatusView>
        <StatusView $w={40}>
          <ViewBreak />
        </StatusView>
        <Slot $w={19}>
          <MinIcon c="#555" w={9} />
        </Slot>
        <ZoomSlider>
          <ZoomTick />
          <ZoomThumb />
        </ZoomSlider>
        <PlusSign $w={19}>+</PlusSign>
        <ZoomValue>295%</ZoomValue>
      </StatusBar>
      <BottomEdge />

      <Dialog>
        <DialogHead>
          <DialogTitle>Move or Copy</DialogTitle>
          <HeadBtn $w={24}>?</HeadBtn>
          <Slot $w={22} />
          <HeadBtn $w={22}>
            <CloseIcon c="#222" />
          </HeadBtn>
          <Slot $w={12} />
        </DialogHead>
        <DialogBody>
          <DlgLine $top={1}>Move selected sheets</DlgLine>
          <DlgLine $top={12}>
            <U>T</U>o book:
          </DlgLine>
          <DlgCombo>
            <DlgComboText>How to duplicate a new worksheet within the sa...</DlgComboText>
            <DlgComboBtn>
              <Chev />
            </DlgComboBtn>
          </DlgCombo>
          <DlgLine $top={7}>
            <U>B</U>efore sheet:
          </DlgLine>
          <ListBox>
            <ListItem $on>Sheet1</ListItem>
            <ListItem>TrainerMohammad.com</ListItem>
            <ListItem>Mohammad El Medawar</ListItem>
            <ListItem>(move to end)</ListItem>
          </ListBox>
          <CheckRow>
            <CheckBox />
            <span>
              <U>C</U>reate a copy
            </span>
          </CheckRow>
          <DlgActions>
            <DlgButton $def>OK</DlgButton>
            <DlgButton>Cancel</DlgButton>
          </DlgActions>
        </DialogBody>
      </Dialog>
    </Page>
  )
}
